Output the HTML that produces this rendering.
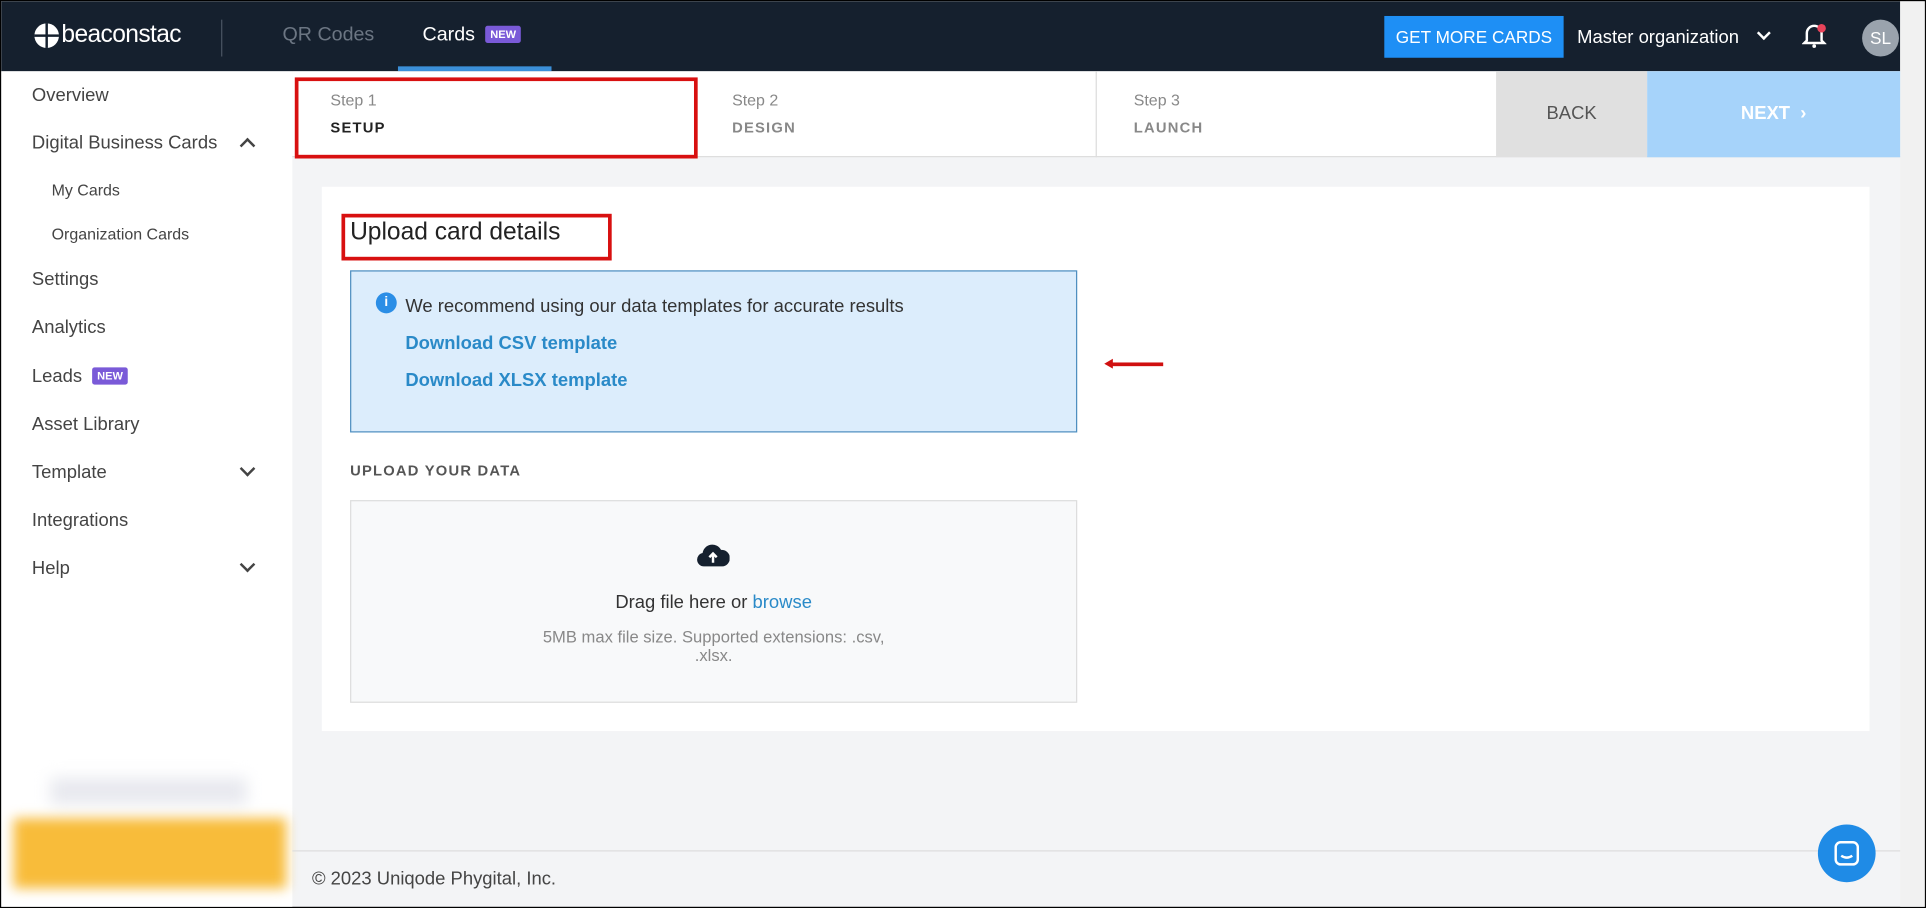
<!DOCTYPE html>
<html><head><meta charset="utf-8"><style>
*{box-sizing:border-box;margin:0;padding:0}
html,body{width:1926px;height:908px;overflow:hidden;background:#fff}
#w{position:absolute;left:0;top:0;width:1568px;height:739px;transform:scale(1.2283,1.2287);transform-origin:0 0;font-family:"Liberation Sans",sans-serif;border:1px solid #000;background:#f3f4f6;overflow:hidden}
.a{position:absolute}
.nav{left:0;top:0;width:1546px;height:57px;background:#15202e}
.side{left:0;top:57px;width:237px;height:682px;background:#fff}
.si{position:absolute;left:25px;font-size:15px;color:#444}
.sub{left:41px;font-size:13px}
.badge{display:inline-block;background:#7a5ad8;color:#fff;font-size:9px;font-weight:bold;padding:2px 4px;border-radius:2px;vertical-align:2px;margin-left:4px}
.chev{position:absolute;left:196px;width:9px;height:9px;border-right:2.5px solid #444;border-bottom:2.5px solid #444;transform:rotate(45deg)}
.red{border:3px solid #d81010}
</style></head><body><div id="w">
<div class="a nav"></div>
<div class="a" style="left:27px;top:18px;width:20px;height:20px;border-radius:50%;background:#fff"></div>
<div class="a" style="left:36px;top:18px;width:2px;height:20px;background:#15202e"></div>
<div class="a" style="left:27px;top:27px;width:20px;height:2px;background:#15202e"></div>
<div class="a" style="left:49px;top:16px;color:#fff;font-size:20px;letter-spacing:-0.5px">beaconstac</div>
<div class="a" style="left:179px;top:15px;width:1px;height:30px;background:#4a5462"></div>
<div class="a" style="left:229px;top:19px;color:#6c7683;font-size:16px">QR Codes</div>
<div class="a" style="left:343px;top:19px;color:#fff;font-size:16px">Cards <span class="badge">NEW</span></div>
<div class="a" style="left:323px;top:53px;width:125px;height:4px;background:#3b8fd8"></div>
<div class="a" style="left:1126px;top:12px;width:146px;height:34px;background:#1e8ff5;color:#fff;font-size:14px;text-align:center;line-height:34px">GET MORE CARDS</div>
<div class="a" style="left:1283px;top:21px;color:#fff;font-size:15px">Master organization</div>
<div class="a" style="left:1431px;top:22px;width:8px;height:8px;border-right:2.5px solid #fff;border-bottom:2.5px solid #fff;transform:rotate(45deg)"></div>
<svg class="a" style="left:1466px;top:17px" width="20" height="22" viewBox="0 0 20 22"><path d="M4 15V9a6 6 0 0 1 12 0v6l2 2H2z" fill="none" stroke="#fff" stroke-width="2"/><circle cx="10" cy="19.5" r="1.5" fill="#fff"/><circle cx="16" cy="5" r="3.5" fill="#e8435a"/></svg>
<div class="a" style="left:1515px;top:15px;width:30px;height:30px;border-radius:50%;background:#9aa3ad;color:#fff;font-size:14px;text-align:center;line-height:30px">SL</div>
<div class="a" style="left:1546px;top:0;width:22px;height:739px;background:#f1f1f1"></div>

<div class="a side"></div>
<div class="si" style="top:68px">Overview</div>
<div class="si" style="top:107px">Digital Business Cards</div>
<div class="chev" style="top:113px;transform:rotate(-135deg)"></div>
<div class="si sub" style="top:146px">My Cards</div>
<div class="si sub" style="top:182px">Organization Cards</div>
<div class="si" style="top:218px">Settings</div>
<div class="si" style="top:257px">Analytics</div>
<div class="si" style="top:297px">Leads <span class="badge">NEW</span></div>
<div class="si" style="top:336px">Asset Library</div>
<div class="si" style="top:375px">Template</div>
<div class="chev" style="top:376px"></div>
<div class="si" style="top:414px">Integrations</div>
<div class="si" style="top:453px">Help</div>
<div class="chev" style="top:454px"></div>
<div class="a" style="left:40px;top:632px;width:160px;height:22px;background:#e8e9ef;filter:blur(6px)"></div>
<div class="a" style="left:10px;top:665px;width:222px;height:57px;background:#f8bc3a;filter:blur(5px)"></div>

<div class="a" style="left:237px;top:57px;width:1309px;height:70px;background:#fff;border-bottom:1px solid #ddd"></div>
<div class="a" style="left:891px;top:57px;width:1px;height:70px;background:#ddd"></div>
<div class="a" style="left:268px;top:73px;font-size:13px;color:#888">Step 1</div>
<div class="a" style="left:268px;top:96px;font-size:12px;color:#222;font-weight:bold;letter-spacing:1px">SETUP</div>
<div class="a" style="left:595px;top:73px;font-size:13px;color:#888">Step 2</div>
<div class="a" style="left:595px;top:96px;font-size:12px;color:#888;font-weight:bold;letter-spacing:1px">DESIGN</div>
<div class="a" style="left:922px;top:73px;font-size:13px;color:#888">Step 3</div>
<div class="a" style="left:922px;top:96px;font-size:12px;color:#888;font-weight:bold;letter-spacing:1px">LAUNCH</div>
<div class="a" style="left:1217px;top:57px;width:123px;height:70px;background:#e0e0e0;color:#555;font-size:15px;text-align:center;line-height:70px">BACK</div>
<div class="a" style="left:1340px;top:57px;width:206px;height:70px;background:#a6d3fa;color:#fff;font-size:15px;font-weight:bold;text-align:center;line-height:70px">NEXT &nbsp;›</div>
<div class="a red" style="left:239px;top:62px;width:328px;height:66px"></div>

<div class="a" style="left:261px;top:151px;width:1260px;height:443px;background:#fff"></div>
<div class="a" style="left:284px;top:177px;font-size:20px;color:#222">Upload card details</div>
<div class="a red" style="left:277px;top:173px;width:220px;height:38px"></div>
<div class="a" style="left:284px;top:219px;width:592px;height:132px;background:#dcedfc;border:1px solid #4f8fc0"></div>
<div class="a" style="left:305px;top:237px;width:17px;height:17px;border-radius:50%;background:#2b8ee6;color:#fff;font-size:11px;font-weight:bold;text-align:center;line-height:17px">i</div>
<div class="a" style="left:329px;top:240px;font-size:15px;color:#333">We recommend using our data templates for accurate results</div>
<div class="a" style="left:329px;top:270px;font-size:15px;color:#2a8ac8;font-weight:bold">Download CSV template</div>
<div class="a" style="left:329px;top:300px;font-size:15px;color:#2a8ac8;font-weight:bold">Download XLSX template</div>
<div class="a" style="left:904px;top:294px;width:42px;height:3px;background:#d01010"></div>
<div class="a" style="left:898px;top:291px;width:0;height:0;border-top:4.5px solid transparent;border-bottom:4.5px solid transparent;border-right:7px solid #d01010"></div>
<div class="a" style="left:284px;top:375px;font-size:12px;color:#555;font-weight:bold;letter-spacing:1px">UPLOAD YOUR DATA</div>
<div class="a" style="left:284px;top:406px;width:592px;height:165px;background:#f8f9fa;border:1px solid #ddd"></div>
<svg class="a" style="left:566px;top:440px" width="27" height="22" viewBox="0 0 27 22"><path d="M6 20a5.5 5.5 0 0 1-1-10.9A8 8 0 0 1 20 6.5 6.5 6.5 0 0 1 21 20z" fill="#15202e"/><path d="M13.5 17V10M10.5 12.5l3-3 3 3" stroke="#fff" stroke-width="2" fill="none"/></svg>
<div class="a" style="left:284px;top:481px;width:592px;text-align:center;font-size:15px;color:#333">Drag file here or <span style="color:#2a8ac8">browse</span></div>
<div class="a" style="left:425px;top:510px;width:310px;text-align:center;font-size:13.5px;color:#888;line-height:15px">5MB max file size. Supported extensions: .csv, .xlsx.</div>

<div class="a" style="left:237px;top:691px;width:1309px;height:1px;background:#ddd"></div>
<div class="a" style="left:253px;top:706px;font-size:15px;color:#444">© 2023 Uniqode Phygital, Inc.</div>
<div class="a" style="left:1479px;top:670px;width:47px;height:47px;border-radius:50%;background:#1f8be6"></div>
<svg class="a" style="left:1492px;top:683px" width="21" height="21" viewBox="0 0 21 21"><rect x="1.5" y="1.5" width="18" height="18" rx="4" fill="none" stroke="#fff" stroke-width="2"/><path d="M6 12.5q4.5 3 9 0" stroke="#fff" stroke-width="2" fill="none"/></svg>
</div></body></html>
